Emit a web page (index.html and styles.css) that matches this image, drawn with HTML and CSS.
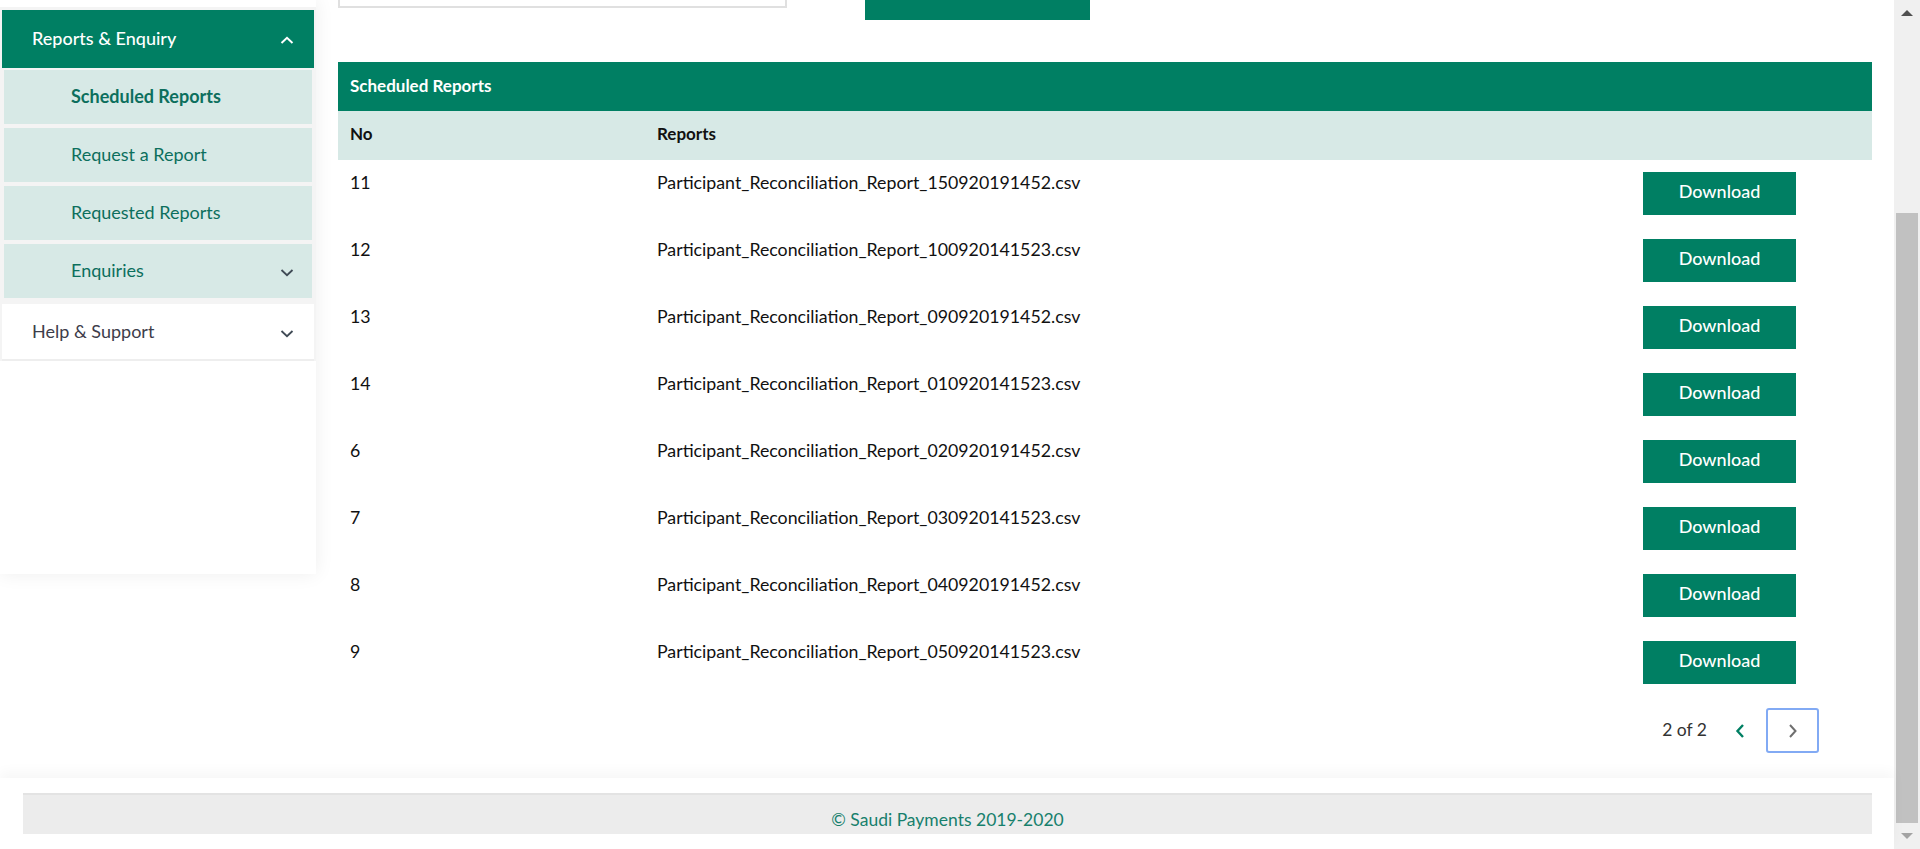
FILE: index.html
```html
<!DOCTYPE html>
<html lang="en">
<head>
<meta charset="utf-8">
<title>Scheduled Reports</title>
<link rel="stylesheet" href="styles.css">
</head>
<body>
<div class="viewport">
  <div class="page">
    <div class="content">
      <aside class="sidebar">
        <div class="menu-stub"></div>
        <div class="menu-group">
          <div class="menu-head">
            <span>Reports &amp; Enquiry</span>
            <svg class="chev" width="14" height="8" viewBox="0 0 14 8"><path d="M1.5 7 L7 1.8 L12.5 7" fill="none" stroke="#fff" stroke-width="2"/></svg>
          </div>
          <ul class="submenu">
            <li class="sub active">Scheduled Reports</li>
            <li class="sub">Request a Report</li>
            <li class="sub">Requested Reports</li>
            <li class="sub">Enquiries
              <svg class="chev" width="14" height="8" viewBox="0 0 14 8"><path d="M1.5 1 L7 6.2 L12.5 1" fill="none" stroke="#3f4a55" stroke-width="1.8"/></svg>
            </li>
          </ul>
        </div>
        <div class="menu-item">
          <span>Help &amp; Support</span>
          <svg class="chev" width="14" height="8" viewBox="0 0 14 8"><path d="M1.5 1 L7 6.2 L12.5 1" fill="none" stroke="#3f4a55" stroke-width="1.8"/></svg>
        </div>
        <div class="sidebar-fill"></div>
      </aside>

      <main class="main">
        <div class="filters">
          <div class="filter-input"></div>
          <div class="filter-btn"></div>
        </div>

        <section class="panel">
          <div class="panel-title">Scheduled Reports</div>
          <div class="grid colhead">
            <div class="cell">No</div>
            <div class="cell">Reports</div>
            <div class="cell"></div>
          </div>
          <div class="grid row"><div class="cell">11</div><div class="cell">Participant_Reconciliation_Report_150920191452.csv</div><div class="cell btn-cell"><button class="dl">Download</button></div></div>
          <div class="grid row"><div class="cell">12</div><div class="cell">Participant_Reconciliation_Report_100920141523.csv</div><div class="cell btn-cell"><button class="dl">Download</button></div></div>
          <div class="grid row"><div class="cell">13</div><div class="cell">Participant_Reconciliation_Report_090920191452.csv</div><div class="cell btn-cell"><button class="dl">Download</button></div></div>
          <div class="grid row"><div class="cell">14</div><div class="cell">Participant_Reconciliation_Report_010920141523.csv</div><div class="cell btn-cell"><button class="dl">Download</button></div></div>
          <div class="grid row"><div class="cell">6</div><div class="cell">Participant_Reconciliation_Report_020920191452.csv</div><div class="cell btn-cell"><button class="dl">Download</button></div></div>
          <div class="grid row"><div class="cell">7</div><div class="cell">Participant_Reconciliation_Report_030920141523.csv</div><div class="cell btn-cell"><button class="dl">Download</button></div></div>
          <div class="grid row"><div class="cell">8</div><div class="cell">Participant_Reconciliation_Report_040920191452.csv</div><div class="cell btn-cell"><button class="dl">Download</button></div></div>
          <div class="grid row"><div class="cell">9</div><div class="cell">Participant_Reconciliation_Report_050920141523.csv</div><div class="cell btn-cell"><button class="dl">Download</button></div></div>
        </section>

        <div class="pager">
          <span class="pager-text">2 of 2</span>
          <button class="pager-prev" aria-label="Previous">
            <svg width="12" height="16" viewBox="0 0 12 16"><path d="M9 2 L3.5 8 L9 14" fill="none" stroke="#007f63" stroke-width="2.4"/></svg>
          </button>
          <button class="pager-next" aria-label="Next">
            <svg width="12" height="16" viewBox="0 0 12 16"><path d="M3 2 L8.5 8 L3 14" fill="none" stroke="#6f6f6f" stroke-width="2"/></svg>
          </button>
        </div>
      </main>
    </div>

    <footer class="footer-wrap">
      <div class="footer">© Saudi Payments 2019-2020</div>
    </footer>
  </div>

  <div class="scrollbar">
    <div class="sb-arrow up"></div>
    <div class="sb-track"><div class="sb-thumb"></div></div>
    <div class="sb-arrow down"></div>
  </div>
</div>
</body>
</html>
```

FILE: styles.css
```css
* { box-sizing: border-box; }

html, body {
  margin: 0;
  padding: 0;
  height: 849px;
  overflow: hidden;
  background: #fff;
  font-family: Lato, "Open Sans", "Liberation Sans", sans-serif;
  color: #111;
}

.viewport {
  display: flex;
  height: 849px;
}

.page {
  flex: 1;
  display: flex;
  flex-direction: column;
  min-width: 0;
}

.content {
  display: flex;
  align-items: flex-start;
  height: 778px;
  overflow: hidden;
}

/* Sidebar */
.sidebar {
  width: 316px;
  flex: none;
  background: #f4f4f4;
  box-shadow: 0 0 18px rgba(0, 0, 0, 0.07);
  display: flex;
  flex-direction: column;
  padding: 0 2px;
}

.menu-stub {
  height: 7px;
  background: #fff;
  margin: 0 -2px;
}

.menu-group {
  margin-top: 3px;
}

.menu-head {
  height: 58px;
  background: #007f63;
  color: #fff;
  font-size: 18px;
  font-weight: 500;
  display: flex;
  align-items: center;
  justify-content: space-between;
  padding: 0 20px 2px 30px;
}

.menu-head .chev { margin-top: 4px; }

.submenu {
  list-style: none;
  margin: 0;
  padding: 2px 2px 0;
  display: flex;
  flex-direction: column;
  gap: 4px;
}

.sub {
  height: 54px;
  background: #d7e9e6;
  color: #0c6f5d;
  font-size: 18px;
  display: flex;
  align-items: center;
  justify-content: space-between;
  padding: 0 18px 3px 67px;
}

.sub.active { font-weight: 700; }

.sub .chev { margin-top: 6px; }

.menu-item {
  margin-top: 6px;
  height: 57px;
  background: #fff;
  color: #3d3d4a;
  font-size: 18px;
  display: flex;
  align-items: center;
  justify-content: space-between;
  padding: 0 20px 2px 30px;
  border-bottom: 2px solid #eeeeee;
}

.menu-item .chev { margin-top: 6px; }

.sidebar-fill {
  height: 213px;
  background: #fff;
  margin: 0 -2px;
}

/* Main */
.main {
  flex: 1;
  min-width: 0;
  margin-left: 22px;
  padding-right: 22px;
}

.filters {
  display: flex;
  align-items: flex-start;
  margin-top: -30px;
  height: 50px;
}

.filter-input {
  width: 449px;
  height: 38px;
  border: 2px solid #e0e0e0;
  background: #fff;
}

.filter-btn {
  width: 225px;
  height: 50px;
  margin-left: 78px;
  background: #007f63;
}

.panel {
  margin-top: 42px;
}

.panel-title {
  height: 49px;
  background: #007f63;
  color: #fff;
  font-weight: 700;
  font-size: 17px;
  display: flex;
  align-items: center;
  padding: 0 0 3px 12px;
}

.grid {
  display: grid;
  grid-template-columns: 307px 998px 229px;
}

.colhead {
  height: 49px;
  background: #d7e9e6;
  font-weight: 700;
  font-size: 17px;
  align-items: center;
  padding-bottom: 4px;
}

.cell {
  padding-left: 12px;
}

.btn-cell { padding-left: 0; }

.row {
  height: 67px;
  font-size: 17.75px;
  line-height: 22px;
  align-items: start;
}

.row .cell {
  padding-top: 11px;
}

.row .btn-cell {
  padding-top: 12px;
}

.dl {
  display: block;
  width: 153px;
  height: 43px;
  border: 0;
  border-radius: 0;
  background: #007f63;
  color: #fff;
  font-family: inherit;
  font-size: 18px;
  font-weight: 500;
  padding: 0 0 6px;
  margin: 0;
  cursor: pointer;
}

.pager {
  display: flex;
  align-items: center;
  justify-content: flex-end;
  margin-top: 12px;
  padding-right: 53px;
  height: 45px;
}

.pager-text {
  font-size: 17.5px;
  color: #333;
  margin-right: 26px;
  padding-bottom: 3px;
}

.pager-prev {
  border: 0;
  background: none;
  padding: 0;
  width: 14px;
  height: 20px;
  display: flex;
  align-items: center;
  justify-content: center;
  margin-right: 19px;
}

.pager-next {
  width: 53px;
  height: 45px;
  border: 2px solid #82aaf4;
  border-radius: 3px;
  background: #fff;
  padding: 0;
  display: flex;
  align-items: center;
  justify-content: center;
}

/* Footer */
.footer-wrap {
  flex: 1;
  background: #fff;
  box-shadow: 0 -6px 12px rgba(0, 0, 0, 0.035);
  padding: 15px 22px 0 23px;
  position: relative;
}

.footer {
  height: 41px;
  background: #ececec;
  border-top: 2px solid #e3e3e3;
  color: #17806d;
  font-size: 17.5px;
  display: flex;
  align-items: center;
  justify-content: center;
  padding-top: 10px;
}

/* Scrollbar */
.scrollbar {
  width: 26px;
  flex: none;
  background: #f0f0f0;
  display: flex;
  flex-direction: column;
}

.sb-arrow {
  height: 26px;
  display: flex;
  align-items: center;
  justify-content: center;
}

.sb-arrow.up::before {
  content: "";
  border-left: 6px solid transparent;
  border-right: 6px solid transparent;
  border-bottom: 6px solid #505050;
}

.sb-arrow.down::before {
  content: "";
  border-left: 6px solid transparent;
  border-right: 6px solid transparent;
  border-top: 6px solid #a3a3a3;
}

.sb-track {
  flex: 1;
  display: flex;
  flex-direction: column;
  justify-content: flex-end;
  padding: 0 2px;
}

.sb-thumb {
  height: 610px;
  background: #c1c1c1;
}
```
